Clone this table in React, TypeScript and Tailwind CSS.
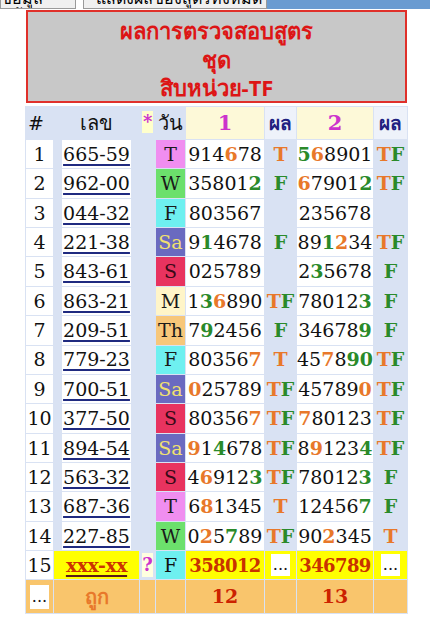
import React from "react";

type Row = {
  n: number;
  num: string;
  day: string;
  a: string;
  ac: string;
  ar: string;
  b: string;
  bc: string;
  br: string;
};

const rows: Row[] = [
  { n: 1, num: "665-59", day: "T", a: "914678", ac: "...o..", ar: "T", b: "568901", bc: "go....", br: "TF" },
  { n: 2, num: "962-00", day: "W", a: "358012", ac: ".....g", ar: "F", b: "679012", bc: "o....g", br: "TF" },
  { n: 3, num: "044-32", day: "F", a: "803567", ac: "......", ar: "", b: "235678", bc: "......", br: "" },
  { n: 4, num: "221-38", day: "Sa", a: "914678", ac: ".g....", ar: "F", b: "891234", bc: "..go..", br: "TF" },
  { n: 5, num: "843-61", day: "S", a: "025789", ac: "......", ar: "", b: "235678", bc: ".g....", br: "F" },
  { n: 6, num: "863-21", day: "M", a: "136890", ac: ".go...", ar: "TF", b: "780123", bc: ".....g", br: "F" },
  { n: 7, num: "209-51", day: "Th", a: "792456", ac: ".g....", ar: "F", b: "346789", bc: ".....g", br: "F" },
  { n: 8, num: "779-23", day: "F", a: "803567", ac: ".....o", ar: "T", b: "457890", bc: "..o.gg", br: "TF" },
  { n: 9, num: "700-51", day: "Sa", a: "025789", ac: "o.....", ar: "TF", b: "457890", bc: ".....o", br: "TF" },
  { n: 10, num: "377-50", day: "S", a: "803567", ac: ".....o", ar: "TF", b: "780123", bc: "o.....", br: "TF" },
  { n: 11, num: "894-54", day: "Sa", a: "914678", ac: "o.g...", ar: "TF", b: "891234", bc: ".o...g", br: "TF" },
  { n: 12, num: "563-32", day: "S", a: "469123", ac: ".o...g", ar: "TF", b: "780123", bc: ".....g", br: "F" },
  { n: 13, num: "687-36", day: "T", a: "681345", ac: ".o....", ar: "T", b: "124567", bc: ".....g", br: "F" },
  { n: 14, num: "227-85", day: "W", a: "025789", ac: ".o.g..", ar: "TF", b: "902345", bc: "..o...", br: "T" },
];

const dayStyle: Record<string, string> = {
  T: "bg-[#f08ef0] text-[#1a1a1a]",
  W: "bg-[#6ce06c] text-[#1a1a1a]",
  F: "bg-[#6ef0f0] text-[#1a1a1a]",
  Sa: "bg-[#6a6ac0] text-[#f0e070]",
  S: "bg-[#e8335f] text-[#3a0a18]",
  M: "bg-[#fff5c8] text-[#1a1a1a]",
  Th: "bg-[#f7c77a] text-[#1a1a1a]",
};

function Digits({ s, c }: { s: string; c: string }) {
  return (
    <span>
      {s.split("").map((ch, i) => {
        const k = c[i];
        if (k === "o")
          return (
            <span key={i} className="text-[#e8782a] font-bold">
              {ch}
            </span>
          );
        if (k === "g")
          return (
            <span key={i} className="text-[#2a8a2a] font-bold">
              {ch}
            </span>
          );
        return <span key={i}>{ch}</span>;
      })}
    </span>
  );
}

function Result({ r }: { r: string }) {
  return (
    <span className="font-bold">
      {r.includes("T") && <span className="text-[#e8782a]">T</span>}
      {r.includes("F") && <span className="text-[#2a8a2a]">F</span>}
    </span>
  );
}

const cell = "flex items-center justify-center overflow-hidden whitespace-nowrap";

export default function App() {
  return (
    <div className="w-[430px] h-[640px] bg-white overflow-hidden font-['DejaVu_Serif',serif] text-[#111]">
      {/* top tab bar */}
      <div className="flex h-[9px] overflow-hidden">
        <div className="w-[76px] h-[9px] bg-[#f0f0f0] border border-t-0 border-[#9a9a9a] overflow-hidden flex justify-end pr-[6px]">
          <span className="text-[16px] leading-[16px] -mt-[10px] font-['Noto_Sans',sans-serif] text-black">ข้อมูลหลัก</span>
        </div>
        <div className="w-[7px] h-[9px] bg-white" />
        <div className="w-[184px] h-[9px] bg-[#f0f0f0] border border-t-0 border-[#9a9a9a] overflow-hidden pl-[12px]">
          <span className="block text-[16px] leading-[16px] -mt-[10px] font-['Noto_Sans',sans-serif] text-black">แสดงผลของสูตรทั้งหมด</span>
        </div>
        <div className="flex-1 h-[9px] bg-[#6a9bd1]" />
      </div>

      {/* title box */}
      <div className="ml-[26px] mt-[1px] w-[381px] h-[93px] bg-[#c8c8c8] border-2 border-[#e0302a] flex flex-col items-center pt-[3px] font-['Noto_Sans',sans-serif] font-bold text-[#dd1515] text-[22px]">
        <div className="leading-[30px]">ผลการตรวจสอบสูตร</div>
        <div className="leading-[29px]">ชุด</div>
        <div className="leading-[26px]">สิบหน่วย-TF</div>
      </div>

      {/* table */}
      <div className="ml-[25px] mt-[3px] w-[383px] bg-[#d9e2f3] p-px grid grid-cols-[27px_85px_15px_29px_78px_31px_76px_33px] gap-px text-[19px]">
        {/* header */}
        <div className="h-[32px] bg-[#d9e2f3] flex items-center pl-[2px]">#</div>
        <div className={`h-[32px] bg-[#d9e2f3] ${cell} font-['Noto_Sans',sans-serif] text-[20px]`}>เลข</div>
        <div className="h-[32px] bg-[#d9e2f3] flex justify-center items-start pt-[4px]">
          <span className="bg-[#ffffcc] text-[#cc33cc] font-bold text-[18px] leading-[22px] px-[1px] w-[11px] text-center">*</span>
        </div>
        <div className={`h-[32px] bg-[#d9e2f3] ${cell} font-['Noto_Sans',sans-serif] text-[20px]`}>วัน</div>
        <div className={`h-[32px] bg-[#fdf9d8] ${cell} text-[#cc33cc] font-bold text-[21px]`}>1</div>
        <div className={`h-[32px] bg-[#eef2fa] ${cell} text-[#202080] font-bold font-['Noto_Sans',sans-serif] text-[19px]`}>ผล</div>
        <div className={`h-[32px] bg-[#fdf9d8] ${cell} text-[#cc33cc] font-bold text-[21px]`}>2</div>
        <div className={`h-[32px] bg-[#eef2fa] ${cell} text-[#202080] font-bold font-['Noto_Sans',sans-serif] text-[19px]`}>ผล</div>

        {rows.map((r) => (
          <React.Fragment key={r.n}>
            <div className={`h-[28.36px] bg-white ${cell}`}>{r.n}</div>
            <div className={`h-[28.36px] bg-[#d9e2f3] ${cell}`}>
              <span className="bg-white h-full flex items-center px-px underline decoration-[#1f2a80] decoration-2 underline-offset-[3px]">
                {r.num}
              </span>
            </div>
            <div className="h-[28.36px] bg-[#d9e2f3]" />
            <div className={`h-[28.36px] ${dayStyle[r.day]} ${cell}`}>{r.day}</div>
            <div className={`h-[28.36px] bg-white ${cell}`}>
              <Digits s={r.a} c={r.ac} />
            </div>
            <div className={`h-[28.36px] bg-[#d9e2f3] ${cell}`}>
              <Result r={r.ar} />
            </div>
            <div className={`h-[28.36px] bg-white ${cell}`}>
              <Digits s={r.b} c={r.bc} />
            </div>
            <div className={`h-[28.36px] bg-[#d9e2f3] ${cell}`}>
              <Result r={r.br} />
            </div>
          </React.Fragment>
        ))}

        {/* row 15 */}
        <div className={`h-[28px] bg-white ${cell}`}>15</div>
        <div className={`h-[28px] bg-[#ffff00] ${cell}`}>
          <span className="font-bold text-[#cc3300] underline decoration-[#5a1a1a] decoration-2 underline-offset-[3px] tracking-[-0.5px]">xxx-xx</span>
        </div>
        <div className={`h-[28px] bg-[#d9e2f3] ${cell}`}>
          <span className="bg-[#ffffe0] text-[#cc33cc] font-bold text-[18px] leading-[24px] w-[11px] text-center">?</span>
        </div>
        <div className={`h-[28px] bg-[#6ef0f0] ${cell}`}>F</div>
        <div className={`h-[28px] bg-[#ffff00] ${cell} font-bold text-[#c83200] text-[18px] tracking-[-0.6px]`}>358012</div>
        <div className={`h-[28px] bg-[#ffff00] ${cell}`}>
          <span className="bg-white text-[16px] leading-[22px] px-[2px]">...</span>
        </div>
        <div className={`h-[28px] bg-[#ffff00] ${cell} font-bold text-[#c83200] text-[18px] tracking-[-0.6px]`}>346789</div>
        <div className={`h-[28px] bg-[#ffff00] ${cell}`}>
          <span className="bg-white text-[16px] leading-[22px] px-[2px]">...</span>
        </div>

        {/* footer */}
        <div className={`h-[33px] bg-[#f9c56c] ${cell}`}>
          <span className="bg-white text-[16px] leading-[24px] px-[2px]">...</span>
        </div>
        <div className={`h-[33px] bg-[#f9c56c] ${cell} font-bold text-[#e8782a] font-['Noto_Sans',sans-serif] text-[20px]`}>ถูก</div>
        <div className="h-[33px] bg-[#f9c56c]" />
        <div className="h-[33px] bg-[#f9c56c]" />
        <div className={`h-[33px] bg-[#f9c56c] ${cell} font-bold text-[#cc2200]`}>12</div>
        <div className="h-[33px] bg-[#f9c56c]" />
        <div className={`h-[33px] bg-[#f9c56c] ${cell} font-bold text-[#cc2200]`}>13</div>
        <div className="h-[33px] bg-[#f9c56c]" />
      </div>
    </div>
  );
}
